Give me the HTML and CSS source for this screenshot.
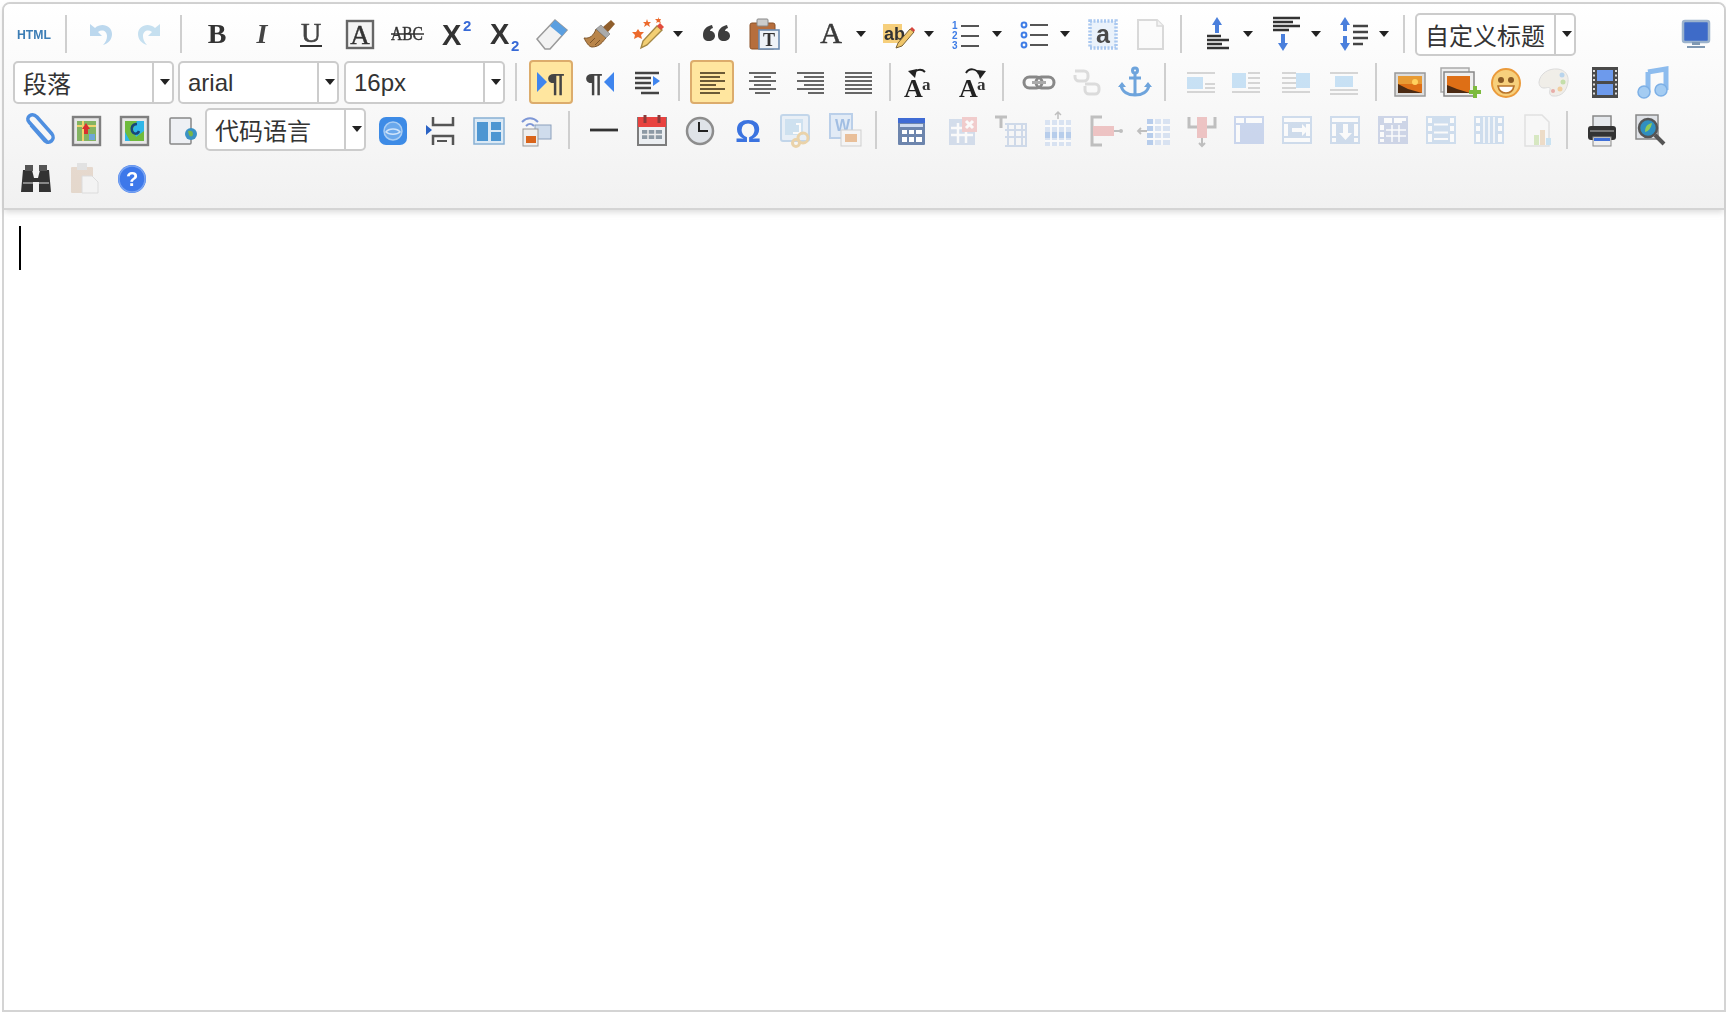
FILE: index.html
```html
<!DOCTYPE html>
<html lang="zh">
<head>
<meta charset="utf-8">
<title>编辑器</title>
<link rel="stylesheet" href="styles.css">
</head>
<body>
<div class="editor">
<div class="toolbar">
<!-- ROW 1 -->
<div class="row">
<span class="b"><svg class="i" viewBox="0 0 32 32"><text class="n bold" x="-1" y="21" font-size="13" fill="#3c7db5" textLength="34" lengthAdjust="spacingAndGlyphs">HTML</text></svg></span>
<span class="sep"></span>
<span class="b"><svg class="i" viewBox="0 0 32 32"><path d="M5 6v12h12l-4-4c4-3 9-1 9 4 0 3-1 6-4 9 6-2 9-6 9-11 0-8-10-12-17-6z" fill="#bcd8ee"/></svg></span>
<span class="b"><svg class="i" viewBox="0 0 32 32"><path d="M27 6v12H15l4-4c-4-3-9-1-9 4 0 3 1 6 4 9-6-2-9-6-9-11 0-8 10-12 17-6z" fill="#c6e0f0"/></svg></span>
<span class="sep"></span>
<span class="b"><svg class="i" viewBox="0 0 32 32"><text class="s bold" x="17" y="25" font-size="28" fill="#333" text-anchor="middle">B</text></svg></span>
<span class="b"><svg class="i" viewBox="0 0 32 32"><text class="s bold it" x="14" y="25" font-size="28" fill="#444" text-anchor="middle">I</text></svg></span>
<span class="b"><svg class="i" viewBox="0 0 32 32"><text class="s" x="15" y="24" font-size="28" fill="#444" stroke="#444" stroke-width=".6" text-anchor="middle">U</text><path d="M4 28h22" stroke="#333" stroke-width="2"/></svg></span>
<span class="b"><svg class="i" viewBox="0 0 32 32"><rect x="3" y="3" width="26" height="27" fill="#f4f4f4" stroke="#666" stroke-width="2.400"/><text class="s" x="16" y="26" font-size="27" fill="#333" stroke="#333" stroke-width=".5" text-anchor="middle">A</text></svg></span>
<span class="b"><svg class="i" viewBox="0 0 32 32"><text class="s" x="15" y="22" font-size="18" fill="#333" stroke="#333" stroke-width=".4" text-anchor="middle" textLength="32" lengthAdjust="spacingAndGlyphs">ABC</text><path d="M-1 16h33" stroke="#333" stroke-width="1.600"/></svg></span>
<span class="b"><svg class="i" viewBox="0 0 32 32"><text class="n bold" x="2" y="27" font-size="29" fill="#333">X</text><text class="n bold" x="23" y="13" font-size="15" fill="#3769d6">2</text></svg></span>
<span class="b"><svg class="i" viewBox="0 0 32 32"><text class="n bold" x="2" y="26" font-size="29" fill="#333">X</text><text class="n bold" x="23" y="33" font-size="15" fill="#3769d6">2</text></svg></span>
<span class="b"><svg class="i" viewBox="0 0 32 32"><path d="M1 21 19 2l12 10-17 19H9z" fill="#f2f2f2" stroke="#999" stroke-width="1.500"/><path d="M14 8l5-6 12 10-5 6z" fill="#5b9fe0"/></svg></span>
<span class="b"><svg class="i" viewBox="0 0 32 32"><path d="M0 20c6 1 10-3 12-9l10 9c-3 3-6 9-14 9-3 0-6-5-8-9z" fill="#b9854a" stroke="#7d5428"/><path d="M6 25l5-5M11 27l5-5" stroke="#7d5428"/><path d="M12 11l5-4 9 9-4 4z" fill="#aaa" stroke="#777" stroke-width=".6"/><path d="M19 9l8-7 4 4-7 8z" fill="#8f5e2c"/></svg></span>
<span class="b ar"><svg class="i" viewBox="0 0 32 32"><path d="M9 30l2-7L25 8l5 4-15 15z" fill="#f3cf73" stroke="#a58845" stroke-width="1.400"/><path d="M25 8l3-3 4 4-3 3z" fill="#e24b3c"/><path d="M6 11l2 3 4 0-3 3 1 4-4-2-4 2 1-4-3-3 4 0zM15 1l1 3 3 0-2 2 1 3-3-2-3 2 1-3-2-2 3 0zM26-1l1 2h2l-1 2 1 2-3-1-2 1 1-2-2-2h3z" fill="#ec6a2c"/></svg><i class="dn"></i></span>
<span class="b"><svg class="i" viewBox="0 0 32 32"><path d="M3 17c0-6 4-9 9-10l1 3c-2 .5-3 2-3 3 3 0 5 2 5 5s-3 5-6 5c-4 0-6-2-6-6zM18 17c0-6 4-9 9-10l1 3c-2 .5-3 2-3 3 3 0 5 2 5 5s-3 5-6 5c-4 0-6-2-6-6z" fill="#3d3d3d"/></svg></span>
<span class="b"><svg class="i" viewBox="0 0 32 32"><rect x="2" y="5" width="25" height="26" rx="2" fill="#b66e3d" stroke="#8a5027"/><rect x="9" y="1" width="11" height="7" rx="1" fill="#ccc" stroke="#888"/><rect x="11" y="12" width="20" height="19" fill="#eef3f8" stroke="#6c8bb0" stroke-width="1.600"/><text class="s bold" x="21" y="28" font-size="18" fill="#333" text-anchor="middle">T</text></svg></span>
<span class="sep"></span>
<span class="b ar"><svg class="i" viewBox="0 0 32 32"><text class="s" x="16" y="25" font-size="30" fill="#3a3a3a" stroke="#3a3a3a" stroke-width=".5" text-anchor="middle">A</text></svg><i class="dn"></i></span>
<span class="b ar"><svg class="i" viewBox="0 0 32 32"><rect x="0" y="6" width="19" height="19" fill="#f6cf7c"/><text class="n bold" x="1" y="22" font-size="18" fill="#333" textLength="21" lengthAdjust="spacingAndGlyphs">ab</text><path d="M13 30l2-5 12-14 4 3-12 14z" fill="#f0c66a" stroke="#776033"/><path d="M27 11l2-2 3 3-1 2z" fill="#d7453c"/></svg><i class="dn"></i></span>
<span class="b ar"><svg class="i" viewBox="0 0 32 32"><text class="n bold" x="1" y="11" font-size="10" fill="#3f7de6">1</text><text class="n bold" x="1" y="21" font-size="10" fill="#3f7de6">2</text><text class="n bold" x="1" y="31" font-size="10" fill="#3f7de6">3</text><path d="M10 8h18M10 18h18M10 28h18" stroke="#555" stroke-width="2.200"/></svg><i class="dn"></i></span>
<span class="b ar"><svg class="i" viewBox="0 0 32 32"><circle cx="5" cy="7" r="2.400" fill="none" stroke="#3f7de6" stroke-width="2"/><circle cx="5" cy="17" r="2.400" fill="none" stroke="#3f7de6" stroke-width="2"/><circle cx="5" cy="27" r="2.400" fill="none" stroke="#3f7de6" stroke-width="2"/><path d="M11 7h18M11 17h18M11 27h18" stroke="#555" stroke-width="2.200"/></svg><i class="dn"></i></span>
<span class="b"><svg class="i" viewBox="0 0 32 32"><rect x="3" y="3" width="26" height="27" fill="#eaf2fb" stroke="#a9c8f0" stroke-width="3.500" stroke-dasharray="2 1.500"/><text class="n bold" x="16" y="25" font-size="25" fill="#4a4a4a" text-anchor="middle">a</text></svg></span>
<span class="b"><svg class="i off" viewBox="0 0 32 32"><path d="M3 2h19l6 6v23H3z" fill="#f7f7f7" stroke="#888" stroke-width="2"/><path d="M22 2v6h6" fill="#ddd" stroke="#888" stroke-width="1.500"/></svg></span>
<span class="sep l"></span>
<span class="b ar"><svg class="i" viewBox="-2 0 32 32"><path d="M13-1l5 8h-3v8h-4V7H8z" fill="#4a7fdc"/><path d="M3 18h14M3 22h22M3 26h15M3 30h22" stroke="#333" stroke-width="2.400"/></svg><i class="dn"></i></span>
<span class="b ar"><svg class="i" viewBox="0 0 32 32"><path d="M3 0h27M3 4h20M3 8h27M3 12h16" stroke="#333" stroke-width="2.400"/><path d="M13 33l-5-8h3v-9h4v9h3z" fill="#4a7fdc"/></svg><i class="dn"></i></span>
<span class="b ar"><svg class="i" viewBox="0 0 32 32"><path d="M7-1l5 8H9v6H5V7H2zM7 33l5-8H9v-7H5v7H2z" fill="#4a7fdc"/><path d="M15 8h15M15 14h15M15 20h15M15 26h10" stroke="#444" stroke-width="2.400"/></svg><i class="dn"></i></span>
<span class="sep l"></span>
<span class="combo c-custom"><span class="val">自定义标题</span><span class="drop"><i class="dn"></i></span></span>
<span class="b push"><svg class="i" viewBox="0 0 32 32"><rect x="3" y="3" width="26" height="21" rx="2" fill="#3e6bc8" stroke="#9cb3cc" stroke-width="2.500"/><path d="M12 24h8v3h-8zM7 28h18v2H7z" fill="#7f98b2"/></svg></span>
</div>
<!-- ROW 2 -->
<div class="row">
<span class="combo c-first"><span class="val">段落</span><span class="drop"><i class="dn"></i></span></span>
<span class="combo c-mid"><span class="val latin">arial</span><span class="drop"><i class="dn"></i></span></span>
<span class="combo c-last"><span class="val latin">16px</span><span class="drop"><i class="dn"></i></span></span>
<span class="sep"></span>
<span class="b on"><svg class="i" viewBox="0 0 32 32"><path d="M2 6l10 10-10 10z" fill="#3f85ee"/><text class="n bold" x="12" y="26" font-size="26" fill="#444" textLength="18" lengthAdjust="spacingAndGlyphs">¶</text></svg></span>
<span class="b"><svg class="i" viewBox="0 0 32 32"><text class="n bold" x="2" y="26" font-size="26" fill="#444" textLength="18" lengthAdjust="spacingAndGlyphs">¶</text><path d="M31 6 21 16l10 10z" fill="#3f85ee"/></svg></span>
<span class="b"><svg class="i" viewBox="0 0 32 32"><path d="M4 7h24M4 12h16M4 17h16M4 22h16M10 27h18" stroke="#444" stroke-width="2.400"/><path d="M22 10l7 5-7 5z" fill="#3f85ee"/></svg></span>
<span class="sep"></span>
<span class="b on back"><svg class="i" viewBox="0 0 32 32"><path d="M4 7h25M4 11h20M4 15h25M4 19h16M4 23h25M4 27h20" stroke="#6b5a36" stroke-width="2.200"/></svg></span>
<span class="b"><svg class="i" viewBox="0 0 32 32"><path d="M3 7h27M8 11h17M3 15h27M8 19h17M3 23h27M9 27h15" stroke="#666" stroke-width="2.200"/></svg></span>
<span class="b"><svg class="i" viewBox="0 0 32 32"><path d="M3 7h27M10 11h20M3 15h27M10 19h20M3 23h27M14 27h16" stroke="#666" stroke-width="2.200"/></svg></span>
<span class="b"><svg class="i" viewBox="0 0 32 32"><path d="M3 7h27M3 11h27M3 15h27M3 19h27M3 23h27M3 27h27" stroke="#666" stroke-width="2.200"/></svg></span>
<span class="sep"></span>
<span class="b big-a"><svg class="i" viewBox="0 0 32 32"><text class="s bold" x="1" y="31" font-size="26" fill="#222">A</text><text class="s bold" x="19" y="24" font-size="17" fill="#333">a</text><path d="M10 9c1-5 8-7 12-3" fill="none" stroke="#222" stroke-width="2"/><path d="M5 5l9-2-2 9z" fill="#222"/></svg></span>
<span class="b big-b"><svg class="i" viewBox="0 0 32 32"><text class="s bold" x="1" y="31" font-size="26" fill="#222">A</text><text class="s bold" x="19" y="24" font-size="17" fill="#333">a</text><path d="M8 7c3-5 10-5 13 1" fill="none" stroke="#222" stroke-width="2"/><path d="M28 5l-9-1 3 9z" fill="#222"/></svg></span>
<span class="sep s3"></span>
<span class="b link"><svg class="i" viewBox="0 0 32 32"><g fill="none" stroke="#888" stroke-width="3"><rect x="1" y="11" width="18" height="11" rx="5.500"/><rect x="13" y="11" width="18" height="11" rx="5.500"/></g><path d="M9 16.500h14" stroke="#aaa" stroke-width="3"/></svg></span>
<span class="b"><svg class="i off" viewBox="0 0 32 32"><g fill="none" stroke="#999" stroke-width="3"><path d="M4 5h9a4 4 0 0 1 4 4v2a4 4 0 0 1-4 4H8a4 4 0 0 1-4-4V9"/><path d="M14 18h10a4 4 0 0 1 4 4v2a4 4 0 0 1-4 4h-6a4 4 0 0 1-4-4v-4"/></g></svg></span>
<span class="b"><svg class="i" viewBox="0 0 32 32"><g fill="none" stroke="#6ea4dc" stroke-width="3"><circle cx="16" cy="4.500" r="2.500"/><path d="M16 7v23M10 12h12M2 19c1 7 7 10 14 10s13-3 14-10"/></g><path d="M-1 21l4-5 4 5zM25 21l4-5 4 5z" fill="#6ea4dc"/></svg></span>
<span class="sep l"></span>
<span class="b img1"><svg class="i off2" viewBox="0 0 32 32"><path d="M2 7h28M2 26h28M20 18h10M20 22h10" stroke="#aaa" stroke-width="2"/><rect x="2" y="11" width="16" height="12" fill="#8cc3ee"/></svg></span>
<span class="b img2"><svg class="i off2" viewBox="0 0 32 32"><path d="M18 7h12M18 12h12M18 17h12M18 22h12M2 26h28" stroke="#aaa" stroke-width="2"/><rect x="2" y="7" width="14" height="15" fill="#8cc3ee"/></svg></span>
<span class="b img3"><svg class="i off2" viewBox="0 0 32 32"><path d="M2 7h14M2 12h14M2 17h14M2 22h14M2 26h28" stroke="#aaa" stroke-width="2"/><rect x="16" y="7" width="14" height="15" fill="#8cc3ee"/></svg></span>
<span class="b img4"><svg class="i off2" viewBox="0 0 32 32"><path d="M2 7h28M2 24h28M2 28h28" stroke="#aaa" stroke-width="2"/><rect x="7" y="10" width="18" height="11" fill="#8cc3ee"/></svg></span>
<span class="sep l"></span>
<span class="b pic-start"><svg class="i" viewBox="0 0 32 32"><rect x="1" y="7" width="30" height="23" fill="#ddd" stroke="#999" stroke-width="1.500"/><rect x="4" y="10" width="24" height="17" fill="#de6f16"/><path d="M4 10h24v8H4z" fill="#e89b34"/><circle cx="21" cy="16" r="3" fill="#ffd15e"/><path d="M4 27v-9l10 5 14 4z" fill="#4b2a12"/></svg></span>
<span class="b"><svg class="i" viewBox="0 0 32 32"><rect x="-1" y="2" width="28" height="24" fill="#eee" stroke="#aaa" stroke-width="1.500"/><rect x="2" y="6" width="30" height="24" fill="#eee" stroke="#888" stroke-width="1.500"/><rect x="5" y="10" width="23" height="17" fill="#de6f16"/><path d="M5 27v-8l10 4 13 4z" fill="#4b2a12"/><path d="M27 24h4v-4h4v4h4v4h-4v4h-4v-4h-4z" fill="#7dbb3e"/></svg></span>
<span class="b"><svg class="i" viewBox="0 0 32 32"><circle cx="16" cy="17" r="14" fill="#f7d07c" stroke="#eb9b3c" stroke-width="2"/><circle cx="11" cy="14" r="3" fill="#8a5a24"/><circle cx="21" cy="14" r="3" fill="#8a5a24"/><path d="M8 20h16c-1 5-4 7-8 7s-7-2-8-7z" fill="#fff" stroke="#b9742a" stroke-width="1.600"/></svg></span>
<span class="b"><svg class="i off3" viewBox="0 0 32 32"><path d="M1 16C2 8 10 2 20 3c7 1 11 6 10 13-1 9-7 15-15 14-3 0-4-3-3-6 1-4-3-2-6-2-3 0-5-2-5-6z" fill="#e8e3d8" stroke="#bbb"/><circle cx="24" cy="9" r="2.500" fill="#7ab0e0"/><circle cx="25" cy="16" r="2.500" fill="#91c55c"/><circle cx="22" cy="23" r="2.500" fill="#eba548"/><circle cx="15" cy="25" r="2" fill="#d9635a"/></svg></span>
<span class="b pic-end"><svg class="i" viewBox="0 0 32 32"><rect x="3" y="1" width="26" height="31" fill="#4a4a4a"/><rect x="8" y="4" width="16" height="11" fill="#6d9aec"/><rect x="8" y="18" width="16" height="11" fill="#6d9aec"/><path d="M5 4v26" stroke="#ddd" stroke-width="2" stroke-dasharray="2 2.500"/><path d="M27 4v26" stroke="#ddd" stroke-width="2" stroke-dasharray="2 2.500"/></svg></span>
<span class="b"><svg class="i" viewBox="0 0 32 32"><path d="M11 6l18-3v21" fill="none" stroke="#8dbcee" stroke-width="5"/><path d="M11 6v20" stroke="#8dbcee" stroke-width="5"/><circle cx="7" cy="26" r="6" fill="#a4ccf2" stroke="#7db0e6" stroke-width="1.500"/><circle cx="24" cy="24" r="6" fill="#a4ccf2" stroke="#7db0e6" stroke-width="1.500"/></svg></span>
</div>
<!-- ROW 3 -->
<div class="row">
<span class="b clip"><svg class="i" viewBox="0 0 32 32"><path d="M26 29 7 8C3 3 10-2 15 3l15 17c4 5-3 11-7 7L9 11" fill="none" stroke="#4f8fe0" stroke-width="3.500"/></svg></span>
<span class="b"><svg class="i" viewBox="0 0 32 32"><rect x="3" y="3" width="27" height="28" fill="#e7e7e7" stroke="#7f7f7f" stroke-width="2.400"/><rect x="7" y="7" width="19" height="20" fill="#83b462"/><path d="M7 12h19M13 7v20" stroke="#f0d36c" stroke-width="2"/><path d="M16 9l4 6h-2v5h-4v-5h-2z" fill="#d92f2f"/><rect x="19" y="20" width="6" height="6" fill="#6ea6d8"/></svg></span>
<span class="b"><svg class="i" viewBox="0 0 32 32"><rect x="3" y="3" width="27" height="28" fill="#e7e7e7" stroke="#7f7f7f" stroke-width="2.400"/><rect x="7" y="7" width="19" height="20" fill="#2fb6e8"/><path d="M7 7h12l-4 8 3 8 8-6v10H12L7 18z" fill="#6fbb3d"/><path d="M19 10c-5 0-6 4-5 7 2 4 6 3 7 0" fill="none" stroke="#17467a" stroke-width="2.500"/></svg></span>
<span class="b"><svg class="i" viewBox="0 0 32 32"><rect x="4" y="4" width="21" height="26" rx="1" fill="#eef0f4" stroke="#888" stroke-width="1.500"/><circle cx="25" cy="20" r="6" fill="#3a92c4"/><path d="M22 17c3-1 5 0 5 3s-3 3-4 1z" fill="#7ab648"/></svg></span>
<span class="combo c-code"><span class="val">代码语言</span><span class="drop"><i class="dn"></i></span></span>
<span class="b after-code"><svg class="i" viewBox="0 0 32 32"><rect x="2" y="3" width="28" height="28" rx="7" fill="#3d8be6"/><circle cx="16" cy="17" r="9" fill="#6aa8ec" stroke="#a9cdf3" stroke-width="1.500"/><path d="M9 18c3-4 11-4 14 0-3 3-11 3-14 0z" fill="none" stroke="#d0e4fa" stroke-width="1.500"/></svg></span>
<span class="b"><svg class="i" viewBox="0 0 32 32"><path d="M8 3v8h20V3M8 31v-9h20v9" fill="none" stroke="#555" stroke-width="2.500"/><path d="M12 27h10" stroke="#555" stroke-width="2"/><path d="M1 11l6 5-6 5z" fill="#2a62c4"/></svg></span>
<span class="b"><svg class="i" viewBox="0 0 32 32"><rect x="1" y="4" width="30" height="26" fill="#dbe9f5" stroke="#88b0d4" stroke-width="1.500"/><rect x="4" y="8" width="11" height="19" fill="#4d96d2"/><rect x="18" y="8" width="10" height="8" fill="#4d96d2"/><rect x="18" y="18" width="10" height="9" fill="#4d96d2"/></svg></span>
<span class="b"><svg class="i" viewBox="0 0 32 32"><g fill="none" stroke="#7e97d6" stroke-width="2"><path d="M1 8c5-5 11-5 16 0M5 12c3-3 5-3 8 0"/></g><rect x="14" y="11" width="16" height="14" fill="#cfdcec" stroke="#8ba0bc"/><rect x="2" y="15" width="15" height="17" fill="#eee" stroke="#999"/><rect x="5" y="22" width="10" height="7" fill="#d9641a"/></svg></span>
<span class="sep"></span>
<span class="b"><svg class="i" viewBox="0 0 32 32"><path d="M2 16h28" stroke="#333" stroke-width="2.800"/></svg></span>
<span class="b"><svg class="i" viewBox="0 0 32 32"><rect x="2" y="4" width="28" height="27" fill="#eceff2" stroke="#7d7d7d" stroke-width="2"/><rect x="2" y="3" width="28" height="10" fill="#e8423f"/><path d="M9 1v8M23 1v8" stroke="#8a3a3a" stroke-width="3"/><path d="M6 16h20v9H6z" fill="#8d9aa5"/><path d="M12 16v9M19 16v9M6 20.500h20" stroke="#eee" stroke-width="1.500"/></svg></span>
<span class="b"><svg class="i" viewBox="0 0 32 32"><circle cx="16" cy="17" r="13" fill="#dfe3e8" stroke="#8d8d8d" stroke-width="2.500"/><path d="M15 8v9h9" fill="none" stroke="#222" stroke-width="2"/></svg></span>
<span class="b"><svg class="i" viewBox="0 0 32 32"><text class="n bold" x="16" y="28" font-size="32" fill="#3b73e0" text-anchor="middle">Ω</text></svg></span>
<span class="b"><svg class="i off3" viewBox="0 0 32 32"><rect x="1" y="1" width="28" height="26" rx="2" fill="#dce9f6" stroke="#8fb6de" stroke-width="2"/><rect x="5" y="5" width="18" height="16" fill="#a7cdea"/><path d="M16 10h4v9h-7" fill="none" stroke="#fff" stroke-width="2"/><circle cx="23" cy="24" r="5" fill="none" stroke="#dfb160" stroke-width="3"/><circle cx="16" cy="29" r="3.500" fill="none" stroke="#dfb160" stroke-width="3"/></svg></span>
<span class="b"><svg class="i off3" viewBox="0 0 32 32"><rect x="2" y="0" width="22" height="24" fill="#cfe1f6" stroke="#7fa9dd" stroke-width="2"/><text class="n bold" x="7" y="17" font-size="16" fill="#4f87d0">W</text><rect x="13" y="16" width="20" height="16" fill="#f4f4f4" stroke="#aaa"/><rect x="17" y="20" width="12" height="8" fill="#dd8a3f"/></svg></span>
<span class="sep"></span>
<span class="b"><svg class="i" viewBox="0 0 32 32"><rect x="3" y="4" width="27" height="27" rx="1" fill="#6d85ad"/><rect x="3" y="4" width="27" height="5" fill="#3f6bd4"/><rect x="5" y="10" width="23" height="3" fill="#cfdcf0"/><path d="M7 16h5v4H7zM14 16h5v4h-5zM21 16h6v4h-6zM7 23h5v5H7zM14 23h5v5h-5zM21 23h6v5h-6z" fill="#fff"/></svg></span>
<span class="b t-start"><svg class="i off2" viewBox="0 0 32 32"><rect x="3" y="5" width="26" height="26" fill="#a9bedd"/><path d="M5 14h22M5 21h22M12 9v20M20 9v20" stroke="#fff" stroke-width="2.500"/><rect x="16" y="3" width="15" height="15" fill="#ea9a9a"/><path d="M20 7l7 7M27 7l-7 7" stroke="#fff" stroke-width="3"/></svg></span>
<span class="b"><svg class="i off3" viewBox="0 0 32 32"><path d="M1 3h12M7 3v11" stroke="#888" stroke-width="3"/><path d="M11 10h21v22H11M14 10v22M21 10v22M28 10v22M11 16h21M11 23h21" fill="none" stroke="#a9bedd" stroke-width="2"/></svg></span>
<span class="b"><svg class="i off3" viewBox="0 0 32 32"><path d="M16 -2v7M13 1l3-3 3 3" fill="none" stroke="#888" stroke-width="1.500"/><rect x="3" y="6" width="26" height="26" fill="#bcd0ee"/><rect x="3" y="18" width="26" height="6" fill="#7aa5e2"/><path d="M3 12h26M3 27h26M9 6v26M16 6v26M23 6v26" stroke="#fff" stroke-width="1.800"/></svg></span>
<span class="b"><svg class="i off3" viewBox="0 0 32 32"><path d="M12 3H2v28h10" fill="none" stroke="#888" stroke-width="3"/><rect x="3" y="12" width="21" height="10" fill="#e59292"/><path d="M24 17h7" stroke="#888" stroke-width="2"/><circle cx="31" cy="17" r="2" fill="#888"/></svg></span>
<span class="b"><svg class="i off3" viewBox="0 0 32 32"><path d="M0 17h10M3 14l-3 3 3 3" fill="none" stroke="#888" stroke-width="1.800"/><rect x="9" y="5" width="23" height="26" fill="#bcd0ee"/><rect x="9" y="5" width="7" height="26" fill="#7aa5e2"/><path d="M9 11h23M9 18h23M9 25h23M16 5v26M24 5v26" stroke="#fff" stroke-width="1.800"/></svg></span>
<span class="b"><svg class="i off3" viewBox="0 0 32 32"><path d="M3 3v10h26V3" fill="none" stroke="#888" stroke-width="3"/><rect x="11" y="3" width="10" height="21" fill="#e59292"/><path d="M16 24v8M13 29l3 3 3-3" fill="none" stroke="#888" stroke-width="2"/></svg></span>
<span class="b t-mid"><svg class="i off3" viewBox="0 0 32 32"><rect x="1" y="2" width="30" height="28" fill="#9fb6e4"/><path d="M3 4h8v5H3zM13 4h16v5H13zM3 11h4v17H3z" fill="#fff"/></svg></span>
<span class="b"><svg class="i off3" viewBox="0 0 32 32"><rect x="1" y="2" width="30" height="28" fill="#a8c2e2"/><path d="M3 4h26v4H3zM3 24h26v4H3zM3 10h4v12H3zM25 10h4v12h-4z" fill="#fff"/><path d="M11 14h10v-4l6 6-6 6v-4H11z" fill="#fff"/></svg></span>
<span class="b"><svg class="i off3" viewBox="0 0 32 32"><rect x="1" y="2" width="30" height="28" fill="#a8c2e2"/><path d="M3 4h26v4H3zM3 24h4v4H3zM25 24h4v4h-4zM3 10h4v12H3zM25 10h4v12h-4z" fill="#fff"/><path d="M14 10h5v9h4l-6.500 7L10 19h4z" fill="#fff"/></svg></span>
<span class="b"><svg class="i off3" viewBox="0 0 32 32"><rect x="1" y="2" width="30" height="28" fill="#a5b4d8"/><path d="M7 4h8v5H7zM17 4h8v5h-8zM3 11h4v5H3zM3 18h4v5H3zM3 25h4v3H3zM25 4h4v3h-4z" fill="#fff"/><path d="M9 16h20M9 22h20M15 11v17M22 11v17" stroke="#fff" stroke-width="1.500"/></svg></span>
<span class="b"><svg class="i off3" viewBox="0 0 32 32"><rect x="1" y="2" width="30" height="28" fill="#a9c6e6"/><path d="M3 4h4v5H3zM25 4h4v5h-4zM3 12h4v5H3zM25 12h4v5h-4zM3 20h4v8H3zM25 20h4v8h-4z" fill="#fff"/><path d="M9 10.500h14M9 18.500h14M9 25h14" stroke="#fff" stroke-width="2"/></svg></span>
<span class="b"><svg class="i off3" viewBox="0 0 32 32"><rect x="1" y="2" width="30" height="28" fill="#a9c6e6"/><path d="M3 4h4v5H3zM25 4h4v5h-4zM3 12h4v5H3zM25 12h4v5h-4zM3 20h4v8H3zM25 20h4v8h-4z" fill="#fff"/><path d="M11 3v26M16 3v26M21 3v26" stroke="#fff" stroke-width="1.600"/></svg></span>
<span class="b t-end"><svg class="i off3" viewBox="0 0 32 32"><path d="M4 1h17l7 7v24H4z" fill="#f8f8f8" stroke="#ccc" stroke-width="1.500"/><rect x="13" y="21" width="5" height="10" fill="#b9db8f"/><rect x="19" y="16" width="5" height="15" fill="#e6c39a"/><rect x="25" y="24" width="5" height="7" fill="#9fd0ee"/></svg></span>
<span class="sep"></span>
<span class="b"><svg class="i" viewBox="0 0 32 32"><rect x="7" y="2" width="18" height="11" fill="#e5e8ec" stroke="#888" stroke-width="1.500"/><rect x="2" y="12" width="28" height="14" rx="3" fill="#333"/><rect x="4" y="16" width="24" height="2" fill="#777"/><rect x="7" y="23" width="18" height="9" fill="#eee" stroke="#888"/><rect x="8" y="24" width="16" height="3" fill="#3f6fd8"/></svg></span>
<span class="b"><svg class="i" viewBox="0 0 32 32"><rect x="2" y="1" width="22" height="24" fill="#dfe2e7" stroke="#888" stroke-width="1.500"/><circle cx="14" cy="14" r="9" fill="#2f8fc0" stroke="#555" stroke-width="2.500"/><path d="M11 18c0-5 2-8 7-9-1 5-3 8-7 9z" fill="#8ecb59"/><path d="M21 21l9 9" stroke="#555" stroke-width="4"/></svg></span>
</div>
<!-- ROW 4 -->
<div class="row">
<span class="b first-4"><svg class="i" viewBox="0 0 32 32"><path d="M3 8h9l2 8h4l2-8h9l2 22H19V20h-6v10H1z" fill="#333"/><rect x="5" y="3" width="8" height="6" fill="#555"/><rect x="19" y="3" width="8" height="6" fill="#555"/><rect x="3" y="20" width="10" height="2" fill="#888"/><rect x="19" y="20" width="10" height="2" fill="#888"/></svg></span>
<span class="b"><svg class="i off" viewBox="0 0 32 32"><rect x="3" y="5" width="22" height="26" rx="1" fill="#c79d78"/><rect x="9" y="1" width="10" height="7" fill="#bbb"/><path d="M14 14h10l6 6v11H14z" fill="#f6f6f6" stroke="#aaa"/></svg></span>
<span class="b"><svg class="i" viewBox="0 0 32 32"><circle cx="16" cy="17" r="14" fill="#3d78ea"/><circle cx="16" cy="17" r="13" fill="none" stroke="#79a4f2" stroke-width="1.500"/><text class="n bold" x="16" y="24" font-size="20" fill="#fff" text-anchor="middle">?</text></svg></span>
</div>
</div>
<div class="body"><span class="caret"></span></div>
</div>
</body>
</html>
```

FILE: styles.css
```css
* { box-sizing: border-box; }
html, body { height: 100%; }
body {
  margin: 0;
  padding: 2px 0 2px 2px;
  background: #fff;
  overflow: hidden;
  font-family: "Liberation Sans", "Noto Sans CJK SC", sans-serif;
  color: #333;
}
.editor {
  height: 100%;
  display: flex;
  flex-direction: column;
  border: 2px solid #d4d4d4;
  border-radius: 8px 8px 0 0;
  background: #fff;
}
.toolbar {
  flex: none;
  height: 206px;
  padding: 6px 4px 0 6px;
  border-bottom: 2px solid #d4d4d4;
  border-radius: 6px 6px 0 0;
  background: linear-gradient(to bottom, #fff, #f1f1f1);
  box-shadow: 0 2px 6px rgba(190, 190, 190, .6);
}
.row { display: flex; align-items: center; height: 48px; }
.b {
  flex: none;
  width: 48px;
  height: 44px;
  display: flex;
  align-items: center;
  justify-content: center;
}
.i { width: 32px; height: 32px; overflow: visible; filter: blur(.6px); }
.off { opacity: .3; }
.off2 { opacity: .45; }
.off3 { opacity: .5; }
.s { font-family: "Liberation Serif", serif; }
.n { font-family: "Liberation Sans", sans-serif; }
.bold { font-weight: 700; }
.it { font-style: italic; }
.sep {
  flex: none;
  width: 2px;
  height: 38px;
  margin: 0 10px 0 7px;
  background: #cfcfcf;
}
.sep.l { margin: 0 12px 0 5px; }
.sep.s3 { margin: 0 13px 0 4px; }
.ar { width: 68px; justify-content: flex-start; padding-left: 8px; }
.dn {
  display: block;
  width: 0;
  height: 0;
  border: 5px solid transparent;
  border-top: 6px solid #222;
  border-bottom: 0;
}
.ar .dn { margin-left: 9px; }
.on { position: relative; }
.on::before {
  content: "";
  position: absolute;
  left: 2px;
  right: 2px;
  top: 0;
  bottom: 0;
  background: #ffe69f;
  border: 2px solid #dcac6c;
  border-radius: 4px;
}
.on .i { position: relative; }
.back { margin-left: -2px; margin-right: 2px; }
.push { margin-left: auto; }
.combo {
  flex: none;
  display: flex;
  width: 161px;
  height: 43px;
  background: #fff;
  border: 2px solid #ccc;
  border-radius: 5px;
  font-size: 24px;
  line-height: 39px;
  color: #333;
}
.val {
  flex: 1;
  padding-left: 8px;
  white-space: nowrap;
  font-family: "Noto Sans CJK SC", "Liberation Sans", sans-serif;
}
.val.latin { font-family: "Liberation Sans", "Noto Sans CJK SC", sans-serif; }
.drop {
  flex: none;
  width: 20px;
  padding-left: 4px;
  display: flex;
  align-items: center;
  justify-content: center;
  border-left: 2px solid #ccc;
}
.c-custom { margin-left: -2px; }
.c-first { margin-left: 3px; }
.c-mid { margin-left: 4px; }
.c-last { margin-left: 5px; margin-right: 3px; }
.c-code { margin: -2px 0 0 -1px; }
.after-code { margin-left: 3px; }
.big-a { margin-left: -6px; }
.big-b { margin-left: 7px; }
.link { margin-left: -2px; }
.img1 { margin-left: -1px; }
.img2 { margin-left: -3px; }
.img3 { margin-left: 2px; }
.img4 { margin-right: 2px; }
.pic-start { margin-left: -3px; }
.pic-end { margin-left: 3px; }
.t-start { margin-left: 3px; }
.t-mid { margin-left: -1px; }
.t-end { margin-right: -2px; }
.clip { margin-left: 4px; }
.first-4 { margin-left: 2px; }
.body { flex: 1; padding: 16px 0 0 15px; }
.caret { display: block; width: 2px; height: 44px; background: #000; }
```
